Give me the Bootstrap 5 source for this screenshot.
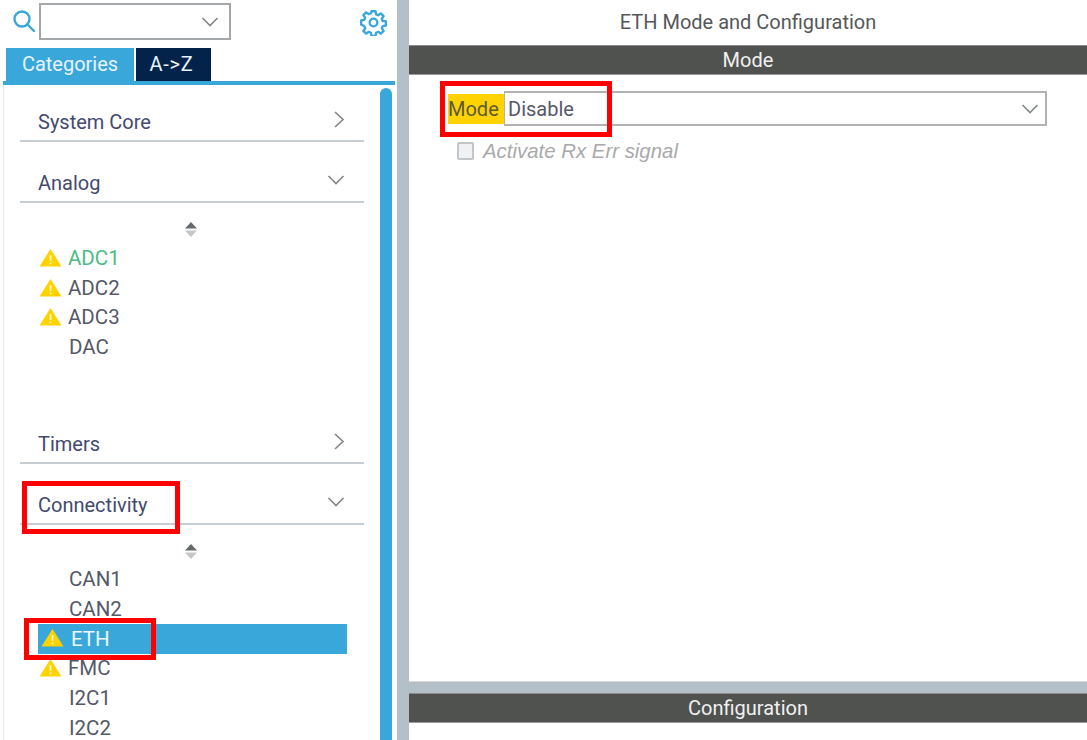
<!DOCTYPE html>
<html lang="en">
<head>
  <meta charset="UTF-8" />
  <meta name="viewport" content="width=device-width, initial-scale=1.0"/>
  <title>ETH Mode and Configuration</title>
  <link href="https://cdn.jsdelivr.net/npm/bootstrap@5.3.2/dist/css/bootstrap.min.css" rel="stylesheet">
  <style>
    html, body { height: 740px; overflow: hidden; }
    body { position: relative; font-family: Roboto, "Liberation Sans", sans-serif; background: #fff; color: #4c5166; }

    .left-pane { width: 397px; height: 740px; }
    .pane-gap { width: 12px; height: 740px; background: #b4c0c7; }
    .right-pane { width: 678px; height: 740px; }

    .search-row { height: 48px; padding: 3px 10px 0 12px; }
    .search-box { width: 192px; height: 37px; border: 2px solid #a4a7a9; margin-left: 3px; padding-right: 10px; }
    .gear-icon { margin-top: 6px; }

    .tab-row { padding-left: 6px; height: 33px; gap: 2px; }
    .tab-item { height: 33px; color: #e8f3fa; font-size: 20px; line-height: 33px; text-align: center; }
    .tab-on { width: 128px; background: #39a7da; }
    .tab-off { width: 75px; background: #03234b; padding-right: 4px; letter-spacing: .8px; }
    .tab-line { height: 4px; margin: 0 2px 0 3px; background: #39a7da; }

    .tree-panel { height: 655px; margin-left: 3px; border-left: 1px solid #e6ebee; }
    .tree-body { width: 360px; padding: 17px 0 0 16px; }
    .tree-bar { width: 12px; height: 652px; margin: 3px 5px 0 0; background: #39a7da; border-radius: 6px 6px 0 0; }

    .group-head { height: 40px; border-bottom: 2px solid #c6ced4; font-size: 20px; padding: 0 19px 0 18px; color: #434a70; margin-bottom: 21px; }
    .group-head span { line-height: 40px; }
    .group-open { margin-bottom: 0; }
    .group-list { height: 221px; padding-top: 19px; }
    .group-list-short { padding-top: 19px; }
    .spin-arrows { display: block; margin: 0 0 7px 165px; }
    .group-list-short .spin-arrows { margin-bottom: 6px; }
    .tree-item { height: 29.7px; line-height: 29.7px; margin-left: 18px; width: 309px; font-size: 20.5px; color: #555868; }
    .tree-item svg { margin: -2px 7px 0 2px; flex: none; }
    .item-blank { padding-left: 31px; }
    .item-ok { color: #4cbb85; }
    .item-sel { background: #39a7da; color: #eef7fc; height: 30px; }
    .item-sel svg { margin: -2px 8px 0 4px; }

    .pane-title { height: 45px; line-height: 44px; font-size: 20px; text-align: center; color: #55575a; }
    .dark-bar { height: 30px; line-height: 29px; background: #505250; border-top: 1px solid #8a8c8b; border-bottom: 1px solid #9a9c9b; color: #f0f0f0; font-size: 20px; text-align: center; }
    .mode-body { height: 606px; padding: 19px 0 0 39px; }
    .mode-label { width: 56px; height: 30px; line-height: 30px; background: #ffd200; color: #5a5a3c; font-size: 20px; }
    .mode-select { width: 543px; height: 35px; margin-top: -3px; border: 2px solid #b0b2b4; border-left-width: 1px; padding: 0 6px 0 3px; font-size: 20px; color: #55586a; }
    .mode-check { margin-top: 10px; padding-left: 9px; color: #a9a9ab; font-family: "Liberation Sans", sans-serif; font-size: 20.4px; font-style: italic; gap: 9px; }
    .mode-check .form-check-input { width: 17px; height: 18px; margin: 0; opacity: 1; background-color: #f0f1f2; border: 2px solid #c3c6c8; border-radius: 2px; }
    .pane-split { height: 12px; background: #b4c0c7; border-top: 1px solid #d4dadd; }

    .red-mark { position: absolute; border: 5px solid #ff0000; }
    .mark-conn { left: 22px; top: 481px; width: 158px; height: 53px; }
    .mark-eth { left: 24px; top: 618px; width: 132px; height: 42px; }
    .mark-mode { left: 440px; top: 81px; width: 172px; height: 56px; }
  </style>
</head>
<body>

  <div class="d-flex">

    <!-- Left: component tree -->
    <div class="left-pane">
      <div class="search-row d-flex">
        <svg width="24" height="28" viewBox="0 0 24 28" class="mt-1" fill="none" stroke="#39a7da" stroke-width="2.4" stroke-linecap="round"><circle cx="10" cy="12" r="7.5"/><path d="M16 18l6 6"/></svg>
        <div class="search-box d-flex align-items-center justify-content-end">
          <svg width="18" height="10" viewBox="0 0 18 10" fill="none" stroke="#85888a" stroke-width="1.7"><path d="M1.5 1l7.5 7.5L16.5 1"/></svg>
        </div>
        <svg class="gear-icon ms-auto" width="27" height="27" viewBox="0 0 24 24" fill="none" stroke="#39a7da" stroke-width="2.1" stroke-linejoin="round"><circle cx="12" cy="12" r="3.4"/><path d="M10.2 2h3.6l.5 2.7 1.9.8 2.3-1.6 2.5 2.5-1.6 2.3.8 1.9 2.8.5v3.6l-2.8.5-.8 1.9 1.6 2.3-2.5 2.5-2.3-1.6-1.9.8-.5 2.8h-3.6l-.5-2.8-1.9-.8-2.3 1.6-2.5-2.5 1.6-2.3-.8-1.9L1 13.8v-3.6l2.8-.5.8-1.9-1.6-2.3 2.5-2.5 2.3 1.6 1.9-.8z"/></svg>
      </div>

      <div class="tab-row d-flex">
        <div class="tab-item tab-on">Categories</div>
        <div class="tab-item tab-off">A-&gt;Z</div>
      </div>
      <div class="tab-line"></div>

      <div class="tree-panel d-flex justify-content-between">
        <div class="tree-body">
          <div class="group-head d-flex justify-content-between">
            <span>System Core</span>
            <svg width="12" height="34" viewBox="0 0 12 34" fill="none" stroke="#85888a" stroke-width="1.7"><path d="M2 10l8 7.5L2 25"/></svg>
          </div>

          <div class="group-head group-open d-flex justify-content-between">
            <span>Analog</span>
            <svg width="18" height="34" viewBox="0 0 18 34" class="open-chev" fill="none" stroke="#85888a" stroke-width="1.7"><path d="M1.5 13l7.5 7.5L16.5 13"/></svg>
          </div>
          <div class="group-list">
            <svg class="spin-arrows" width="12" height="15" viewBox="0 0 12 15"><path d="M6 0l6 6.5H0z" fill="#66696b"/><path d="M0 8.5h12L6 15z" fill="#c4c7c9"/></svg>
            <div class="tree-item item-ok d-flex align-items-center"><svg width="21" height="18" viewBox="0 0 21 18"><path d="M10.5 1L20.5 17H.5z" fill="#ffd200" stroke="#ffd200" stroke-linejoin="round" stroke-width="1.2"/><path d="M10.5 6v6M10.5 13.6v1.6" stroke="#fff7cf" stroke-width="1.8"/></svg>ADC1</div>
            <div class="tree-item d-flex align-items-center"><svg width="21" height="18" viewBox="0 0 21 18"><path d="M10.5 1L20.5 17H.5z" fill="#ffd200" stroke="#ffd200" stroke-linejoin="round" stroke-width="1.2"/><path d="M10.5 6v6M10.5 13.6v1.6" stroke="#fff7cf" stroke-width="1.8"/></svg>ADC2</div>
            <div class="tree-item d-flex align-items-center"><svg width="21" height="18" viewBox="0 0 21 18"><path d="M10.5 1L20.5 17H.5z" fill="#ffd200" stroke="#ffd200" stroke-linejoin="round" stroke-width="1.2"/><path d="M10.5 6v6M10.5 13.6v1.6" stroke="#fff7cf" stroke-width="1.8"/></svg>ADC3</div>
            <div class="tree-item item-blank">DAC</div>
          </div>

          <div class="group-head d-flex justify-content-between">
            <span>Timers</span>
            <svg width="12" height="34" viewBox="0 0 12 34" fill="none" stroke="#85888a" stroke-width="1.7"><path d="M2 10l8 7.5L2 25"/></svg>
          </div>

          <div class="group-head group-open d-flex justify-content-between">
            <span>Connectivity</span>
            <svg width="18" height="34" viewBox="0 0 18 34" fill="none" stroke="#85888a" stroke-width="1.7"><path d="M1.5 13l7.5 7.5L16.5 13"/></svg>
          </div>
          <div class="group-list-short">
            <svg class="spin-arrows" width="12" height="15" viewBox="0 0 12 15"><path d="M6 0l6 6.5H0z" fill="#66696b"/><path d="M0 8.5h12L6 15z" fill="#c4c7c9"/></svg>
            <div class="tree-item item-blank">CAN1</div>
            <div class="tree-item item-blank">CAN2</div>
            <div class="tree-item item-sel d-flex align-items-center"><svg width="21" height="18" viewBox="0 0 21 18"><path d="M10.5 1L20.5 17H.5z" fill="#ffd200" stroke="#ffd200" stroke-linejoin="round" stroke-width="1.2"/><path d="M10.5 6v6M10.5 13.6v1.6" stroke="#fff7cf" stroke-width="1.8"/></svg>ETH</div>
            <div class="tree-item d-flex align-items-center"><svg width="21" height="18" viewBox="0 0 21 18"><path d="M10.5 1L20.5 17H.5z" fill="#ffd200" stroke="#ffd200" stroke-linejoin="round" stroke-width="1.2"/><path d="M10.5 6v6M10.5 13.6v1.6" stroke="#fff7cf" stroke-width="1.8"/></svg>FMC</div>
            <div class="tree-item item-blank">I2C1</div>
            <div class="tree-item item-blank">I2C2</div>
          </div>
        </div>
        <div class="tree-bar"></div>
      </div>
    </div>

    <div class="pane-gap"></div>

    <!-- Right: mode and configuration -->
    <div class="right-pane">
      <div class="pane-title">ETH Mode and Configuration</div>
      <div class="dark-bar">Mode</div>
      <div class="mode-body">
        <div class="d-flex">
          <div class="mode-label">Mode</div>
          <div class="mode-select d-flex align-items-center justify-content-between">
            <span>Disable</span>
            <svg width="18" height="10" viewBox="0 0 18 10" fill="none" stroke="#85888a" stroke-width="1.7"><path d="M1.5 1l7.5 7.5L16.5 1"/></svg>
          </div>
        </div>
        <div class="mode-check d-flex align-items-center">
          <input class="form-check-input" type="checkbox" disabled>
          <span>Activate Rx Err signal</span>
        </div>
      </div>
      <div class="pane-split"></div>
      <div class="dark-bar">Configuration</div>
    </div>
  </div>

  <!-- Red call-outs drawn over the screenshot -->
  <div class="red-mark mark-conn"></div>
  <div class="red-mark mark-eth"></div>
  <div class="red-mark mark-mode"></div>

  <script src="https://cdn.jsdelivr.net/npm/bootstrap@5.3.2/dist/js/bootstrap.bundle.min.js"></script>
</body>
</html>
